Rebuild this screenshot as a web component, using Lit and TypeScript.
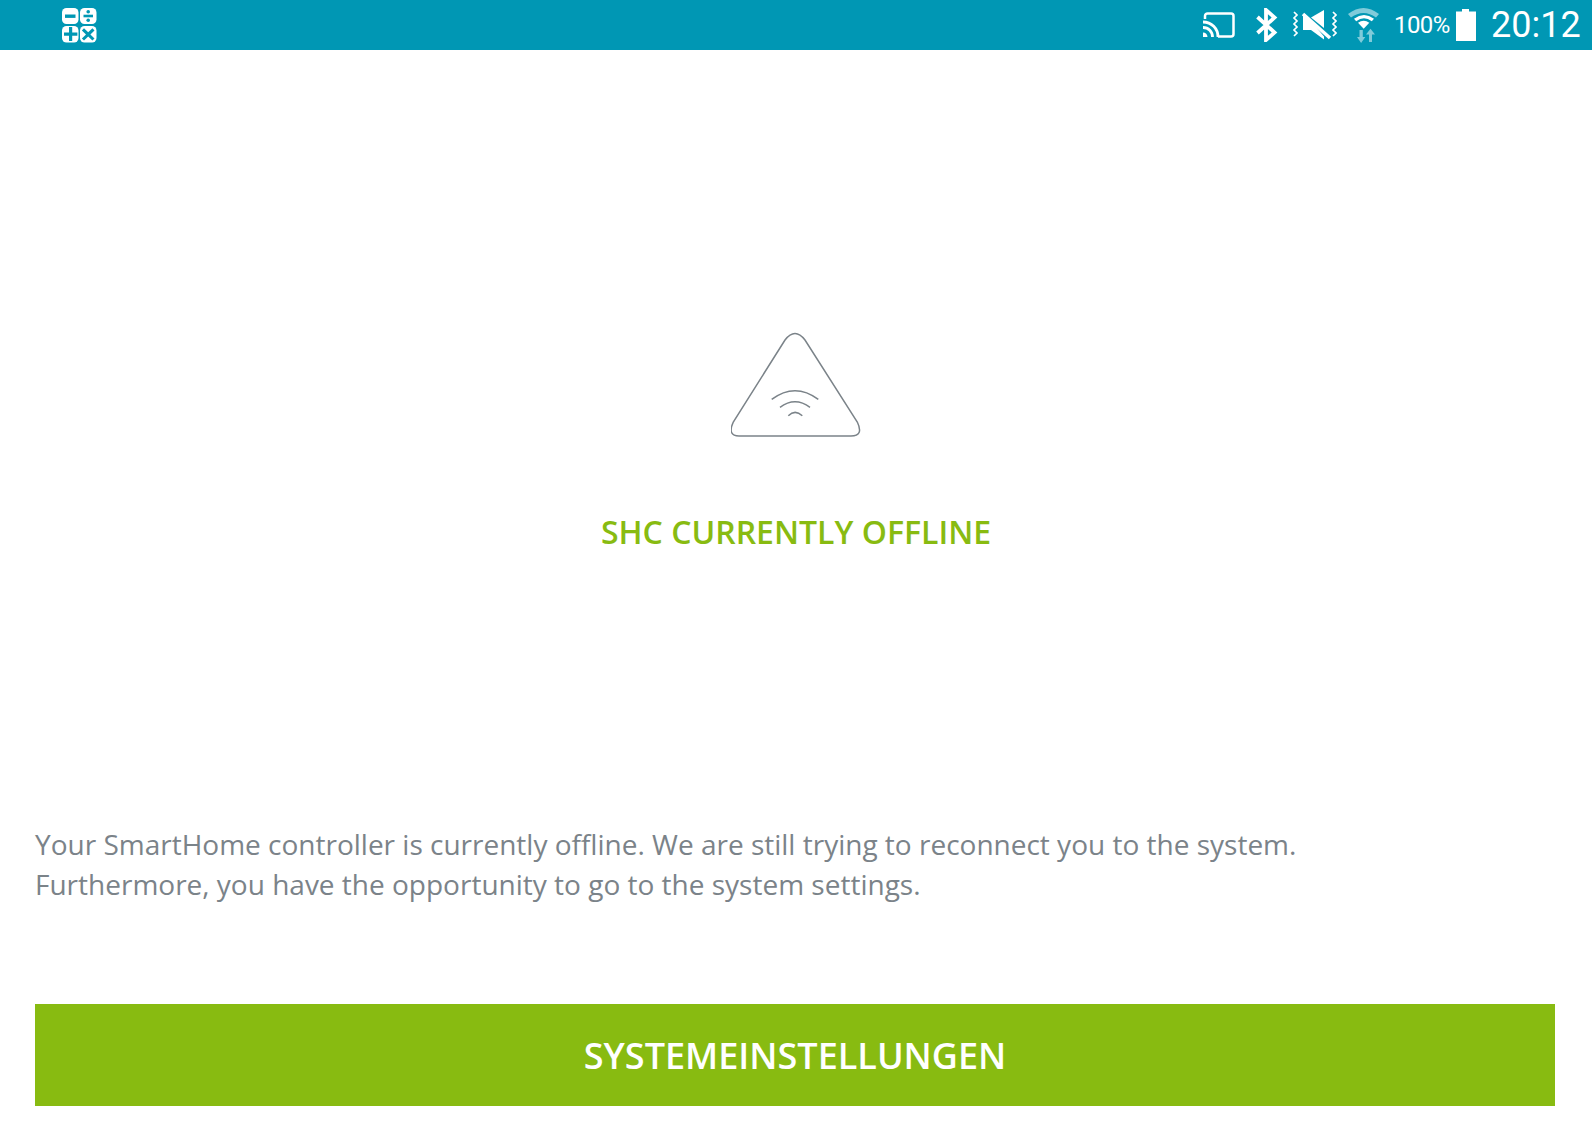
import { LitElement, html, css } from "lit";
import { customElement } from "lit/decorators.js";

@customElement("app-root")
export class AppRoot extends LitElement {
  static styles = css`
    :host { display: block; width: 1592px; height: 1141px; background: #fff; font-family: "Open Sans", sans-serif; overflow: hidden; }
    .status { height: 50px; background: #0097b4; display: flex; align-items: center; padding: 0 11px 0 61px; color: #fff; box-sizing: border-box; }
    .status svg { display: block; flex: none; }
    .spacer { flex: 1; }
    .right { display: flex; align-items: center; font-family: Roboto, sans-serif; }
    .cast { margin-right: 20px; }
    .bt { margin-right: 12px; }
    .mute { margin-right: 11px; }
    .wifi { margin-right: 13px; }
    .pct { font-size: 24px; letter-spacing: -0.6px; width: 60px; margin-right: 2px; }
    .batt { margin-right: 15px; }
    .clock { font-size: 36px; font-weight: 400; width: 90px; }
    .main { display: flex; flex-direction: column; align-items: center; padding-top: 282px; }
    .title { margin-top: 72px; color: #88bb11; font-size: 32px; font-weight: 600; line-height: 44px; height: 44px; }
    .desc { align-self: stretch; margin: 270px 35px 0; color: #7b8389; font-size: 28px; line-height: 40px; }
    .btn { align-self: stretch; margin: 100px 37px 0 35px; height: 102px; border: 0; background: #88bb11; color: #fff; font: 600 36px "Open Sans", sans-serif; display: flex; align-items: center; justify-content: center; }
  `;

  render() {
    return html`
      <div class="status">
        <svg width="36" height="36" viewBox="0 0 36 36">
          <rect x="1" y="1" width="16.5" height="16" rx="4.5" fill="#fff"/>
          <rect x="19" y="1" width="16.5" height="16" rx="4.5" fill="#fff"/>
          <rect x="1" y="19" width="16.5" height="16.5" rx="4.5" fill="#fff"/>
          <rect x="19" y="19" width="16.5" height="16.5" rx="4.5" fill="#fff"/>
          <rect x="4" y="7.5" width="10.5" height="3.4" fill="#0097b4"/>
          <rect x="22.5" y="7.7" width="9.5" height="2.6" fill="#0097b4"/>
          <circle cx="27.2" cy="4.7" r="1.8" fill="#0097b4"/>
          <circle cx="27.2" cy="13.3" r="1.8" fill="#0097b4"/>
          <path d="M8 21.5h3.2v5.6h5.2v3.2h-5.2v5.2H8v-5.2H3v-3.2h5z" transform="translate(0 -1.5)" fill="#0097b4"/>
          <path d="M23 22.5l4.2 4 4.2-4 2.1 2.1-4.1 4 4.1 4-2.1 2.1-4.2-4-4.2 4-2.1-2.1 4.1-4-4.1-4z" transform="translate(0 -1.2)" fill="#0097b4"/>
        </svg>
        <div class="spacer"></div>
        <div class="right">
          <svg class="cast" width="33" height="26" viewBox="0 0 33 26">
            <path d="M3 7V4a2.500 2.500 0 0 1 2.500-2.500H29a2.500 2.500 0 0 1 2.500 2.500v18a2.500 2.500 0 0 1-2.500 2.500H16" fill="none" stroke="#fff" stroke-width="2.500"/>
            <path d="M1 10c8.500 0 15 6.500 15 15M1 15.500c5.500 0 9.500 4 9.500 9.500" fill="none" stroke="#fff" stroke-width="2.800"/>
            <path d="M1 20.500c2.500 0 4.500 2 4.500 4.500H1z" fill="#fff"/>
          </svg>
          <svg class="bt" width="24" height="34" viewBox="0 0 24 34">
            <path d="M2.500 9l17 15.500L11 32V2l8.500 7.500L2.500 25" fill="none" stroke="#fff" stroke-width="3.800"/>
          </svg>
          <svg class="mute" width="46" height="32" viewBox="0 0 46 32">
            <g transform="translate(-6 -7)">
              <path d="M26 15.500L39 8v18z" fill="#fff"/>
              <path d="M18 12v16h8l13 9.500V34.500L20 12z" fill="#fff"/>
              <path d="M18 12l27 24" stroke="#fff" stroke-width="3.500"/>
              <path d="M9 10l3 3-3 3 3 3-3 3 3 3-3 3 3 3-3 3M48 10l3 3-3 3 3 3-3 3 3 3-3 3 3 3-3 3" fill="none" stroke="#fff" stroke-width="1.700"/>
            </g>
          </svg>
          <svg class="wifi" width="33" height="36" viewBox="0 0 33 36">
            <path d="M0 7Q15.500-5 31 7l-3 3.500Q15.500 1.500 3 10.500z" fill="#fff" opacity=".5"/>
            <path d="M6 11.700Q16 4.500 26 11.700l-2.200 2.500Q16 8.500 8.200 14.200z" fill="#fff"/>
            <path d="M10 15.700q5.700-4 11.300 0l-5.600 6z" fill="#fff"/>
            <path d="M11.500 23h3.300v7h2.500l-4.200 6-4.100-6h2.500zM21 35h3v-7.500h3l-4.500-5.800-4.500 5.800h3z" fill="#fff" opacity=".5"/>
          </svg>
          <span class="pct">100%</span>
          <svg class="batt" width="20" height="32" viewBox="0 0 20 32">
            <path d="M6 0h7v2.500h7V32H0V2.500h6z" fill="#fff"/>
          </svg>
          <span class="clock">20:12</span>
        </div>
      </div>
      <div class="main">
        <svg width="130" height="106" viewBox="0 0 130 106">
          <path d="M54 8Q64-5 74 8L126.300 90Q133 104 120 104H8Q-4 104 2.300 90z" fill="none" stroke="#7b8389" stroke-width="1.500"/>
          <path d="M40.700 67.300Q64 50 87.300 67.300M49 75.300Q64 64 79 75.300M57.300 83.700Q64 77 71.300 83.700" fill="none" stroke="#7b8389" stroke-width="1.500"/>
        </svg>
        <div class="title">SHC CURRENTLY OFFLINE</div>
        <div class="desc">Your SmartHome controller is currently offline. We are still trying to reconnect you to the system.<br>Furthermore, you have the opportunity to go to the system settings.</div>
        <button class="btn">SYSTEMEINSTELLUNGEN</button>
      </div>
    `;
  }
}
